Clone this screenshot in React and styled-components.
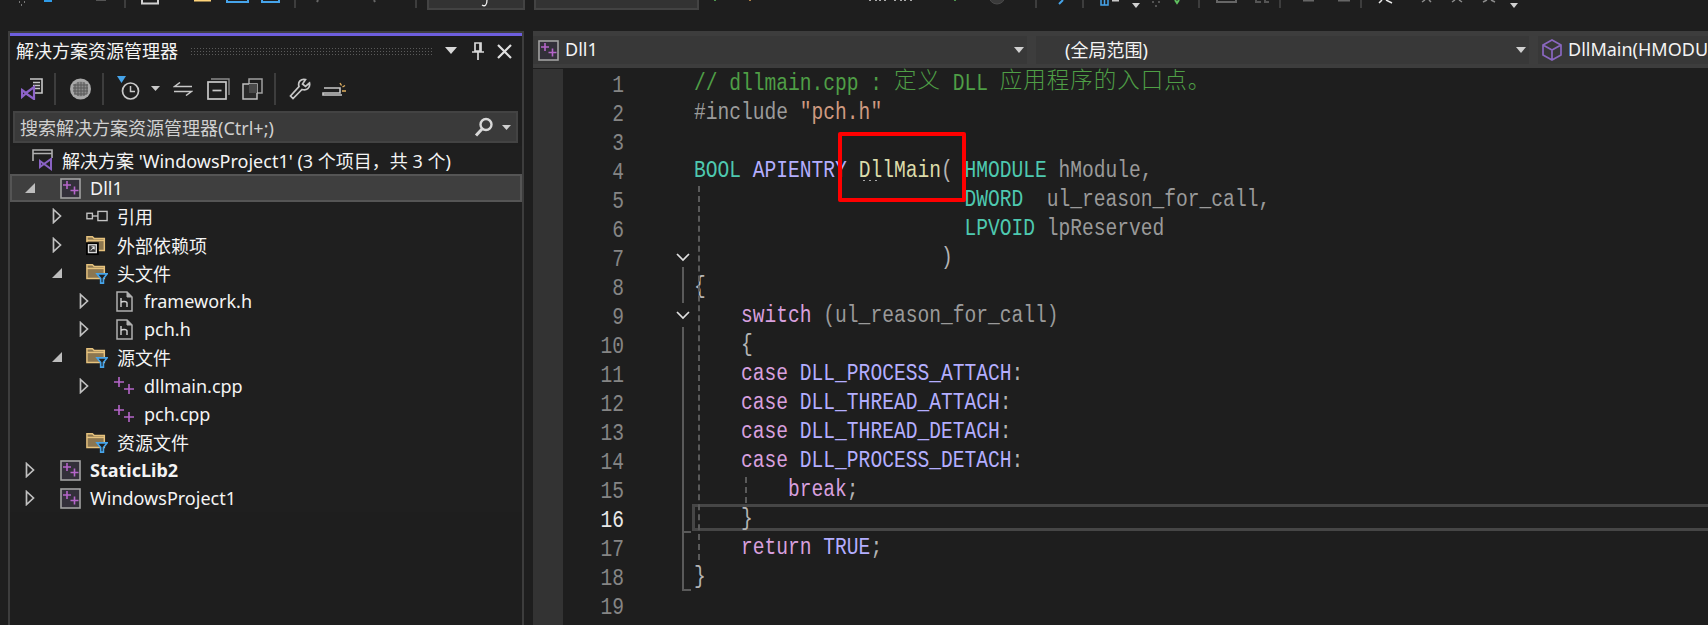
import React from "react"
import styled, { createGlobalStyle } from "styled-components"

const uiFont = `"Noto Sans", "Noto Sans CJK SC", sans-serif`
const cjkFont = `"Noto Sans CJK SC", "Noto Sans", sans-serif`
const codeFont = `"Liberation Mono", "Noto Sans CJK SC", monospace`

const GlobalStyle = createGlobalStyle`
  html, body {
    margin: 0;
    padding: 0;
    background: #1e1e1e;
    overflow: hidden;
  }
`

const Page = styled.div`
  display: flex;
  flex-direction: column;
  width: 1708px;
  height: 625px;
  overflow: hidden;
  background: #1e1e1e;
  color: #f1f1f1;
  font-family: ${uiFont};
`

/* top toolbar, only its bottom edge is visible */
const TopBar = styled.div`
  display: flex;
  flex: none;
  height: 10px;
  overflow: hidden;
`

const TopGroup = styled.svg`
  display: block;
  flex: none;
  width: ${p => p.$w}px;
  height: 10px;
`

const TopSep = styled.div`
  flex: none;
  width: 2px;
  height: 8px;
  background: #3d3d3d;
`

const TopCombo = styled.div`
  flex: none;
  box-sizing: border-box;
  width: ${p => p.$w}px;
  height: 10px;
  margin-left: ${p => p.$gap || 0}px;
  background: #333;
  border: 2px solid #434343;
  border-top: none;
`

const Workspace = styled.div`
  display: flex;
  flex: 1;
  min-height: 0;
  margin-top: 21px;
  padding-left: 8px;
`

/* solution explorer */
const Panel = styled.section`
  flex: none;
  box-sizing: border-box;
  width: 516px;
  border: 2px solid #3d3d3d;
  border-bottom: none;
  background: #1e1e1e;
`

const Accent = styled.div`
  height: 3px;
  background: #6e5fde;
`

const TitleRow = styled.div`
  display: flex;
  align-items: center;
  height: 30px;
  padding-left: 6px;
`

const Title = styled.span`
  flex: none;
  width: 174px;
  margin-top: -2px;
  font-family: ${cjkFont};
  font-size: 18px;
  line-height: 30px;
  color: #f4f4f4;
`

const Grip = styled.div`
  flex: none;
  width: 244px;
  height: 8px;
  background-image: radial-gradient(#5a5a5a 0.8px, transparent 1px);
  background-size: 3px 3px;
`

const TitleIcon = styled.svg`
  display: block;
  flex: none;
  margin-left: ${p => p.$gap}px;
`

const ToolRow = styled.div`
  display: flex;
  align-items: center;
  height: 45px;
  padding-left: 11px;
`

const Tool = styled.svg`
  display: block;
  flex: none;
  margin-left: ${p => p.$gap || 0}px;
  margin-right: ${p => p.$after || 0}px;
`

const ToolSep = styled.div`
  flex: none;
  width: 2px;
  height: 32px;
  margin-left: ${p => p.$gap}px;
  background: #3d3d3d;
`

const SearchBox = styled.div`
  display: flex;
  align-items: center;
  box-sizing: border-box;
  height: 32px;
  margin: 0 4px 0 3px;
  padding-left: 5px;
  background: #3a3a3a;
  border: 2px solid #434343;
`

const SearchText = styled.span`
  flex: 1;
  font-family: ${uiFont};
  font-size: 18px;
  color: #d0d0d0;
  white-space: nowrap;
`

const Tree = styled.div`
  margin-top: 3px;
  background: #1f1f1f;
`

const Row = styled.div`
  display: flex;
  align-items: center;
  box-sizing: border-box;
  height: 28.2px;
  padding-left: ${p => 10 + (p.$level || 0) * 27}px;
  background: ${p => (p.$selected ? "#3f3f3f" : "transparent")};
  outline: ${p => (p.$selected ? "2px solid #555" : "none")};
  outline-offset: -2px;
`

const SolutionRow = styled(Row)`
  padding-left: 22px;
`

const Arrow = styled.span`
  display: flex;
  flex: none;
  align-items: center;
  justify-content: center;
  width: 20px;
  height: 100%;
`

const IconSlot = styled.span`
  display: flex;
  flex: none;
  align-items: center;
  justify-content: center;
  width: 22px;
  margin-left: ${p => (p.$flat ? 0 : 19)}px;
`

const Label = styled.span`
  margin-left: ${p => (p.$flat ? 8 : 9)}px;
  font-family: ${uiFont};
  font-size: 18px;
  font-weight: ${p => (p.$bold ? 700 : 400)};
  color: #f4f4f4;
  white-space: nowrap;
`

/* editor */
const Editor = styled.main`
  display: flex;
  flex: 1;
  flex-direction: column;
  min-width: 0;
  margin-left: 9px;
`

const NavBar = styled.div`
  display: flex;
  flex: none;
  gap: 9px;
  box-sizing: border-box;
  height: 37px;
  padding: 5px 0 4px;
  background: #3d3d3d;
`

const NavCombo = styled.div`
  display: flex;
  flex: ${p => (p.$grow ? "1" : "none")};
  align-items: center;
  box-sizing: border-box;
  width: ${p => p.$w}px;
  min-width: 0;
  padding-left: ${p => p.$pad}px;
  overflow: hidden;
  background: #383838;
  font-size: 18px;
  white-space: nowrap;
`

const NavLabel = styled.span`
  flex: 1;
  margin-top: -2px;
  margin-left: ${p => p.$gap}px;
  overflow: hidden;
  font-family: ${uiFont};
  color: #f4f4f4;
`

const NavCaret = styled.svg`
  display: block;
  flex: none;
  margin-right: 3px;
`

const EditorBody = styled.div`
  display: flex;
  flex: 1;
  min-height: 0;
  margin-top: 1px;
`

const GlyphMargin = styled.div`
  flex: none;
  width: 30px;
  background: #333;
`

const LineNumbers = styled.div`
  flex: none;
  width: 61px;
  text-align: right;
`

const LineNumber = styled.div`
  height: 29px;
  font-family: ${codeFont};
  font-size: 19.6px;
  line-height: 29px;
  color: ${p => (p.$current ? "#e8e8e8" : "#858585")};
  transform: translateY(3px) scaleY(1.22);
`

const FoldMargin = styled.svg`
  display: block;
  flex: none;
  width: 70px;
  height: 556px;
`

const Code = styled.div`
  position: relative;
  flex: 1;
  min-width: 0;
`

const CodeLine = styled.div`
  position: relative;
  height: 29px;
  font-family: ${codeFont};
  font-size: 19.6px;
  line-height: 29px;
  white-space: pre;

  ${p =>
    p.$current &&
    `&::before {
      content: "";
      position: absolute;
      top: 0;
      right: 0;
      bottom: 2px;
      left: -2px;
      border: 3px solid #464646;
      border-right: none;
    }`}
`

const Token = styled.span`
  display: inline-block;
  color: ${p => p.$c};
  transform: translateY(1px) scaleY(1.22);
  transform-origin: 50% 55%;
`

const Cjk = styled.span`
  font-family: "Noto Sans CJK SC", sans-serif;
  font-size: 22.5px;
  font-weight: 300;
  line-height: 0;
  letter-spacing: 1px;
  color: ${p => p.$c};
`

const Guide = styled.div`
  position: absolute;
  top: ${p => p.$top}px;
  left: ${p => p.$left}px;
  width: 0;
  height: ${p => p.$h}px;
  border-left: 2px dashed #5a5a5a;
`

const HintDots = styled.div`
  position: absolute;
  top: 23px;
  left: 167px;
  width: 18px;
  height: 3px;
  background-image: radial-gradient(#a8a8a8 1.1px, transparent 1.4px);
  background-size: 6px 3px;
`

const RedMark = styled.div`
  position: absolute;
  top: 63px;
  left: 144px;
  box-sizing: border-box;
  width: 128px;
  height: 70px;
  border: 4px solid #ff0000;
  border-radius: 2px;
`

const c = {
  comment: "#4f9e46",
  prep: "#9b9b9b",
  str: "#cf9a80",
  type: "#4ec9b0",
  macro: "#b4aeff",
  func: "#dcdcaa",
  punct: "#b4b4b4",
  param: "#9a9a9a",
  kw: "#d8a0df",
}

const Collapsed = () => (
  <Arrow>
    <svg width="10" height="16" viewBox="0 0 10 16">
      <path d="M1.5 1.5 L8.5 8 L1.5 14.5 Z" fill="none" stroke="#c0c0c0" strokeWidth="1.7" />
    </svg>
  </Arrow>
)

const Expanded = () => (
  <Arrow>
    <svg width="10" height="10" viewBox="0 0 10 10">
      <path d="M10 0 V10 H0 Z" fill="#bdbdbd" />
    </svg>
  </Arrow>
)

const Plus = ({ x, y, s = 4 }) => (
  <path d={`M${x - s} ${y} H${x + s} M${x} ${y - s} V${y + s}`} stroke="#b565c9" strokeWidth="1.6" fill="none" />
)

const ProjectIcon = () => (
  <svg width="21" height="21" viewBox="0 0 21 21">
    <rect x="1" y="1" width="19" height="19" fill="#33303a" stroke="#a2a2a2" strokeWidth="1.6" />
    <Plus x={7} y={7} />
    <Plus x={14.5} y={12.5} />
  </svg>
)

const CppIcon = () => (
  <svg width="22" height="20" viewBox="0 0 22 20">
    <Plus x={6} y={6} s={5} />
    <Plus x={16} y={13} s={5} />
  </svg>
)

const HeaderIcon = () => (
  <svg width="17" height="21" viewBox="0 0 17 21">
    <path d="M1 1 H11 L16 6 V20 H1 Z" fill="#1f1f1f" stroke="#b0b0b0" strokeWidth="1.5" />
    <path d="M11 1 V6 H16" fill="#b0b0b0" stroke="#b0b0b0" />
    <path d="M5 7 V16 M5 11.5 C6 10 11 10 11 12 V16" fill="none" stroke="#d0d0d0" strokeWidth="1.4" />
  </svg>
)

const FolderShape = () => (
  <>
    <path d="M1 3 H7 L9 5 H20 V18 H1 Z" fill="#8b7650" stroke="#e6c27d" strokeWidth="1.6" />
    <path d="M1 7 H20" stroke="#e6c27d" strokeWidth="1.6" />
  </>
)

const FilterFolderIcon = () => (
  <svg width="24" height="24" viewBox="0 0 24 24">
    <FolderShape />
    <path d="M12 13 H23 L19 18 V23 H16 V18 Z" fill="#1f1f1f" stroke="#46a4ea" strokeWidth="1.8" />
  </svg>
)

const ExternalIcon = () => (
  <svg width="24" height="24" viewBox="0 0 24 24">
    <FolderShape />
    <rect x="0" y="9" width="14" height="14" fill="#000" />
    <rect x="2" y="11" width="10" height="10" fill="#d8d8d8" />
    <rect x="3.5" y="12.5" width="7" height="7" fill="#333" />
    <path d="M5 18 L9 14 M6 14 H9 V17" stroke="#e0e0e0" strokeWidth="1.1" fill="none" />
  </svg>
)

const RefIcon = () => (
  <svg width="24" height="12" viewBox="0 0 24 12">
    <rect x="1" y="3" width="6" height="6" fill="none" stroke="#c4c4c4" strokeWidth="1.5" />
    <path d="M7 6 H13" stroke="#c4c4c4" strokeWidth="1.5" />
    <rect x="13" y="1" width="10" height="10" fill="none" stroke="#c4c4c4" strokeWidth="1.5" />
  </svg>
)

const SolutionIcon = () => (
  <svg width="22" height="22" viewBox="0 0 22 22">
    <path d="M1 12 V1 H20 V9 M1 4.5 H20" fill="none" stroke="#b0b0b0" strokeWidth="1.6" />
    <path d="M8 12 L12 15 L19 10 V20 L12 15 L8 18 Z" fill="none" stroke="#8a63c4" strokeWidth="2" />
  </svg>
)

const Caret = ({ color = "#d0d0d0" }) => (
  <NavCaret width="10" height="6" viewBox="0 0 10 6">
    <path d="M0 0 H10 L5 6 Z" fill={color} />
  </NavCaret>
)

const tree = [
  { level: 0, arrow: "open", icon: <ProjectIcon />, text: "Dll1", selected: true },
  { level: 1, arrow: "closed", icon: <RefIcon />, text: "引用" },
  { level: 1, arrow: "closed", icon: <ExternalIcon />, text: "外部依赖项" },
  { level: 1, arrow: "open", icon: <FilterFolderIcon />, text: "头文件" },
  { level: 2, arrow: "closed", icon: <HeaderIcon />, text: "framework.h" },
  { level: 2, arrow: "closed", icon: <HeaderIcon />, text: "pch.h" },
  { level: 1, arrow: "open", icon: <FilterFolderIcon />, text: "源文件" },
  { level: 2, arrow: "closed", icon: <CppIcon />, text: "dllmain.cpp" },
  { level: 2, icon: <CppIcon />, text: "pch.cpp" },
  { level: 1, icon: <FilterFolderIcon />, text: "资源文件" },
  { level: 0, arrow: "closed", icon: <ProjectIcon />, text: "StaticLib2", bold: true },
  { level: 0, arrow: "closed", icon: <ProjectIcon />, text: "WindowsProject1" },
]

const T = (c, s) => ({ c, s })

const code = [
  [T(c.comment, "// dllmain.cpp : "), { c: c.comment, cjk: "定义" }, T(c.comment, " DLL "), { c: c.comment, cjk: "应用程序的入口点。" }],
  [T(c.prep, "#include "), T(c.str, "\"pch.h\"")],
  [],
  [T(c.type, "BOOL "), T(c.macro, "APIENTRY "), T(c.func, "DllMain"), T(c.punct, "( "), T(c.type, "HMODULE "), T(c.param, "hModule,")],
  [T(c.type, "                       DWORD  "), T(c.param, "ul_reason_for_call,")],
  [T(c.type, "                       LPVOID "), T(c.param, "lpReserved")],
  [T(c.punct, "                     )")],
  [T(c.punct, "{")],
  [T(c.kw, "    switch "), T(c.param, "(ul_reason_for_call)")],
  [T(c.punct, "    {")],
  [T(c.kw, "    case "), T(c.macro, "DLL_PROCESS_ATTACH"), T(c.punct, ":")],
  [T(c.kw, "    case "), T(c.macro, "DLL_THREAD_ATTACH"), T(c.punct, ":")],
  [T(c.kw, "    case "), T(c.macro, "DLL_THREAD_DETACH"), T(c.punct, ":")],
  [T(c.kw, "    case "), T(c.macro, "DLL_PROCESS_DETACH"), T(c.punct, ":")],
  [T(c.kw, "        break"), T(c.punct, ";")],
  [T(c.punct, "    }")],
  [T(c.kw, "    return "), T(c.macro, "TRUE"), T(c.punct, ";")],
  [T(c.punct, "}")],
  [],
]

export default function App() {
  return (
    <Page>
      <GlobalStyle />
      <TopBar>
        <TopGroup $w={124}>
          <path d="M19 2 h1 M24 2 h1 M21 5 h1" stroke="#777" strokeWidth="2" />
          <rect x="44" y="0" width="8" height="2" fill="#2f9be8" />
          <rect x="96" y="0" width="10" height="1" fill="#555" />
        </TopGroup>
        <TopSep />
        <TopGroup $w={168}>
          <path d="M16 0 V3.5 H32 V0" fill="none" stroke="#d0d0d0" strokeWidth="2" />
          <rect x="68" y="0" width="17" height="1.5" fill="#ffd479" />
          <path d="M101 0 V2 H122 V0" fill="none" stroke="#46a4ea" strokeWidth="2" />
          <path d="M136 0 V2 H153 V0" fill="none" stroke="#46a4ea" strokeWidth="2" />
        </TopGroup>
        <TopSep />
        <TopGroup $w={119}>
          <path d="M21 2 L22 0 M78 0 L79 2" stroke="#666" strokeWidth="2" />
        </TopGroup>
        <TopSep />
        <TopCombo $w={98} $gap={10}>
          <svg width="96" height="8" style={{ display: "block" }}>
            <path d="M53 5 C56 7 58 5 58 0" fill="none" stroke="#f0f0f0" strokeWidth="1.3" />
          </svg>
        </TopCombo>
        <TopCombo $w={165} $gap={9} />
        <TopGroup $w={336}>
          <path d="M16 0 V1" stroke="#5fbf5f" strokeWidth="1.5" />
          <path d="M51 0 V1" stroke="#e0a050" strokeWidth="1.5" />
          <path d="M171 0 V1 M177 0 V1 M181 0 V1 M186 0 V1 M196 0 V1 M202 0 V1 M206 0 V1 M212 0 V1" fill="none" stroke="#d8d8d8" strokeWidth="1.5" />
          <path d="M256 0 V1" stroke="#5fbf5f" strokeWidth="1.5" />
          <circle cx="298" cy="-4" r="8" fill="#3a3a3a" stroke="#4a4a4a" />
        </TopGroup>
        <TopSep />
        <TopGroup $w={45}>
          <path d="M22 4 L26 0" stroke="#46a4ea" strokeWidth="2" />
        </TopGroup>
        <TopSep />
        <TopGroup $w={114}>
          <path d="M17 0 V5 H24 V0 M20.5 0 V5" fill="none" stroke="#46a4ea" strokeWidth="1.5" />
          <rect x="28" y="0" width="7" height="1.5" fill="#c8c8c8" />
          <path d="M48 3 H56 L52 8 Z" fill="#d0d0d0" />
          <path d="M68 2 h2 M74 2 h2 M71 6 h2" stroke="#666" strokeWidth="1.5" />
          <path d="M91 0 L93 3 L95 0" fill="none" stroke="#5fbf5f" strokeWidth="2" />
        </TopGroup>
        <TopSep />
        <TopGroup $w={79}>
          <path d="M17 0 V2 H36 V0" fill="none" stroke="#666" strokeWidth="2" />
          <path d="M56 0 V2 H61 M65 0 V2 H69" fill="none" stroke="#555" strokeWidth="2" />
        </TopGroup>
        <TopSep />
        <TopGroup $w={79}>
          <rect x="22" y="0" width="11" height="1.5" fill="#666" />
          <rect x="57" y="0" width="12" height="1.5" fill="#666" />
        </TopGroup>
        <TopSep />
        <TopGroup $w={170}>
          <path d="M60 2 L63 0 M67 0 L69 2 M90 2 L93 0 M97 0 L100 2 M121 2 L125 0 M129 0 L133 2" fill="none" stroke="#8a8a8a" strokeWidth="1.5" />
          <path d="M17 3 L20 0 M24 0 L30 3" fill="none" stroke="#e8e8e8" strokeWidth="1.5" />
          <path d="M148 3 H156 L152 8 Z" fill="#d0d0d0" />
        </TopGroup>
      </TopBar>

      <Workspace>
        <Panel>
          <Accent />
          <TitleRow>
            <Title>解决方案资源管理器</Title>
            <Grip />
            <TitleIcon $gap={10} width="14" height="8" viewBox="0 0 14 8">
              <path d="M1 0 H13 L7 7 Z" fill="#d8d8d8" />
            </TitleIcon>
            <TitleIcon $gap={14} width="12" height="18" viewBox="0 0 12 18">
              <path d="M3 1 H9 V9 H3 Z M8 1 V9 M0 10 H12 M6 10 V18" fill="none" stroke="#d8d8d8" strokeWidth="1.7" />
            </TitleIcon>
            <TitleIcon $gap={13} width="15" height="15" viewBox="0 0 15 15">
              <path d="M1 1 L14 14 M14 1 L1 14" stroke="#e0e0e0" strokeWidth="2.2" />
            </TitleIcon>
          </TitleRow>

          <ToolRow>
            <Tool width="23" height="23" viewBox="0 0 23 23">
              <path d="M9 2 H21 V16 H14" fill="#1e1e1e" stroke="#c8c8c8" strokeWidth="1.6" />
              <path d="M12 5.5 H19 M12 8.5 H19 M12 11.5 H19" stroke="#c8c8c8" strokeWidth="1.3" />
              <path d="M1 13 L5 16 L13 10 V22 L5 16.5 L1 20 Z" fill="#1e1e1e" stroke="#8d63c9" strokeWidth="2.2" />
            </Tool>
            <ToolSep $gap={10} />
            <Tool $gap={13} width="23" height="22" viewBox="0 0 23 22">
              <circle cx="11.5" cy="11" r="10.5" fill="#a8a8a8" />
              <circle cx="11.5" cy="11" r="7.5" fill="#8c8c8c" />
              <path d="M6 6 V16 M9 4 V18 M12 4 V18 M15 4 V18 M18 6 V16 M4 7 H19 M4 10 H19 M4 13 H19 M5 16 H18" stroke="#585858" strokeWidth="1" />
            </Tool>
            <ToolSep $gap={10} />
            <Tool $gap={13} width="24" height="25" viewBox="0 0 24 25">
              <path d="M0 0 H9 L4.5 7 Z" fill="#46a4ea" />
              <circle cx="13.5" cy="15" r="8" fill="none" stroke="#c8c8c8" strokeWidth="1.7" />
              <path d="M13.5 10 V15.5 H18" fill="none" stroke="#c8c8c8" strokeWidth="1.5" />
            </Tool>
            <Tool $gap={10} width="9" height="5" viewBox="0 0 9 5">
              <path d="M0 0 H9 L4.5 5 Z" fill="#c8c8c8" />
            </Tool>
            <Tool $gap={13} width="20" height="14" viewBox="0 0 20 14">
              <path d="M7 0.5 L1.5 4.5 H19 M13 13.5 L18.5 9.5 H1" fill="none" stroke="#c8c8c8" strokeWidth="1.5" />
            </Tool>
            <Tool $gap={14} width="23" height="22" viewBox="0 0 23 22">
              <path d="M4 1 H22 V17" fill="none" stroke="#8a8a8a" strokeWidth="1.4" />
              <rect x="1" y="4" width="18" height="17" fill="#1e1e1e" stroke="#c8c8c8" strokeWidth="1.7" />
              <path d="M5.5 12.5 H14.5" stroke="#c8c8c8" strokeWidth="1.7" />
            </Tool>
            <Tool $gap={12} width="21" height="22" viewBox="0 0 21 22">
              <rect x="7" y="1" width="13" height="14" fill="none" stroke="#a0a0a0" strokeWidth="1.5" />
              <rect x="1" y="6" width="14" height="15" fill="#2a2a2a" stroke="#c0c0c0" strokeWidth="1.5" />
              <rect x="7" y="6" width="8" height="9" fill="#4a4a4a" />
            </Tool>
            <ToolSep $gap={11} />
            <Tool $gap={13} width="22" height="22" viewBox="0 0 22 22">
              <path d="M20.5 5 L16.5 8.5 L13.5 6 L16.5 1.5 C12 0.5 8.5 4 10 8.5 L1.5 18 L4 20.5 L13 11.5 C17.5 13 21.5 10 20.5 5 Z" fill="#1e1e1e" stroke="#c8c8c8" strokeWidth="1.7" />
            </Tool>
            <Tool $gap={11} width="25" height="14" viewBox="0 0 25 14">
              <path d="M4 6 H18 V11 H1 V13 H20" fill="none" stroke="#c8c8c8" strokeWidth="1.6" />
              <path d="M2 6 L4 6" stroke="#c8c8c8" strokeWidth="1.6" />
              <path d="M18 1 L19.5 3.5 M23 3.5 L20.5 5 M20 9 H24" stroke="#e0b060" strokeWidth="1.4" />
            </Tool>
          </ToolRow>

          <SearchBox>
            <SearchText>搜索解决方案资源管理器(Ctrl+;)</SearchText>
            <Tool width="20" height="20" viewBox="0 0 20 20">
              <circle cx="12" cy="7.5" r="5.5" fill="none" stroke="#d8d8d8" strokeWidth="2.4" />
              <path d="M8 12 L2 18.5" stroke="#d8d8d8" strokeWidth="3" />
            </Tool>
            <Tool $gap={8} $after={5} width="9" height="5" viewBox="0 0 9 5">
              <path d="M0 0 H9 L4.5 5 Z" fill="#d0d0d0" />
            </Tool>
          </SearchBox>

          <Tree>
            <SolutionRow>
              <IconSlot $flat>
                <SolutionIcon />
              </IconSlot>
              <Label $flat>解决方案 'WindowsProject1' (3 个项目，共 3 个)</Label>
            </SolutionRow>
            {tree.map(item => (
              <Row key={item.text} $level={item.level} $selected={item.selected}>
                {item.arrow === "open" ? <Expanded /> : item.arrow === "closed" ? <Collapsed /> : <Arrow />}
                <IconSlot>{item.icon}</IconSlot>
                <Label $bold={item.bold}>{item.text}</Label>
              </Row>
            ))}
          </Tree>
        </Panel>

        <Editor>
          <NavBar>
            <NavCombo $w={494} $pad={5}>
              <ProjectIcon />
              <NavLabel $gap={6}>Dll1</NavLabel>
              <Caret />
            </NavCombo>
            <NavCombo $w={493} $pad={29}>
              <NavLabel $gap={0}>(全局范围)</NavLabel>
              <Caret />
            </NavCombo>
            <NavCombo $grow $pad={4}>
              <svg width="20" height="24" viewBox="0 0 20 24" style={{ flex: "none" }}>
                <path d="M10 2 L19 7 V17 L10 22 L1 17 V7 Z M1 7 L10 12 L19 7 M10 12 V22" fill="none" stroke="#8a67c0" strokeWidth="1.7" />
              </svg>
              <NavLabel $gap={6}>DllMain(HMODU</NavLabel>
            </NavCombo>
          </NavBar>

          <EditorBody>
            <GlyphMargin />
            <LineNumbers>
              {code.map((_, i) => (
                <LineNumber key={i} $current={i === 15}>
                  {i + 1}
                </LineNumber>
              ))}
            </LineNumbers>
            <FoldMargin viewBox="0 0 70 556">
              <path d="M53 185 L59 191 L65 185" fill="none" stroke="#e0e0e0" strokeWidth="1.7" />
              <path d="M53 243 L59 249 L65 243" fill="none" stroke="#e0e0e0" strokeWidth="1.7" />
              <path d="M59 198 V234" fill="none" stroke="#5a5a5a" strokeWidth="2" />
              <path d="M59 258 V521 H67 M59 463 H67" fill="none" stroke="#5a5a5a" strokeWidth="2" />
            </FoldMargin>
            <Code>
              {code.map((tokens, i) => (
                <CodeLine key={i} $current={i === 15}>
                  {tokens.map((t, j) =>
                    t.cjk ? (
                      <Cjk key={j} $c={t.c}>
                        {t.cjk}
                      </Cjk>
                    ) : (
                      <Token key={j} $c={t.c}>
                        {t.s}
                      </Token>
                    )
                  )}
                  {i === 3 && <HintDots />}
                </CodeLine>
              ))}
              <Guide $left={4} $top={117} $h={374} />
              <Guide $left={51} $top={408} $h={26} />
              <RedMark />
            </Code>
          </EditorBody>
        </Editor>
      </Workspace>
    </Page>
  )
}
